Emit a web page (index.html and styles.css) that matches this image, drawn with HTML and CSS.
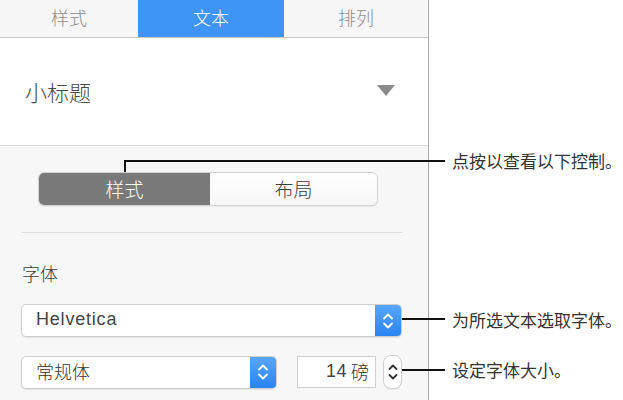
FILE: index.html
```html
<!DOCTYPE html>
<html lang="zh-CN">
<head>
<meta charset="utf-8">
<link rel="stylesheet" href="styles.css">
</head>
<body>
<div class="page">
  <div class="panel">
    <div class="tabs">
      <div class="tab tab-style">样式</div>
      <div class="tab tab-text active">文本</div>
      <div class="tab tab-arrange">排列</div>
    </div>
    <div class="header">
      <span class="heading">小标题</span>
      <svg class="disclosure" width="18" height="11" viewBox="0 0 18 11"><path d="M0 0 H18 L9 11 Z" fill="#8a8a8a"/></svg>
    </div>
    <div class="lower">
      <div class="segmented">
        <div class="seg seg-on">样式</div>
        <div class="seg">布局</div>
      </div>
      <div class="rule"></div>
      <div class="label">字体</div>
      <div class="popup popup-font">
        <span class="popup-value latin">Helvetica</span>
        <span class="popup-btn">
          <svg width="12" height="20" viewBox="0 0 12 20"><path d="M2 7.5 L6 3.5 L10 7.5 M2 12.5 L6 16.5 L10 12.5" fill="none" stroke="#fff" stroke-width="1.8" stroke-linecap="round" stroke-linejoin="round"/></svg>
        </span>
      </div>
      <div class="row">
        <div class="popup popup-weight">
          <span class="popup-value">常规体</span>
          <span class="popup-btn">
            <svg width="12" height="20" viewBox="0 0 12 20"><path d="M2 7.5 L6 3.5 L10 7.5 M2 12.5 L6 16.5 L10 12.5" fill="none" stroke="#fff" stroke-width="1.8" stroke-linecap="round" stroke-linejoin="round"/></svg>
          </span>
        </div>
        <div class="size-field"><span class="num">14</span>&nbsp;磅</div>
        <div class="stepper">
          <svg width="12" height="22" viewBox="0 0 12 22"><path d="M2.5 8 L6 4.5 L9.5 8 M2.5 14 L6 17.5 L9.5 14" fill="none" stroke="#333" stroke-width="1.8" stroke-linecap="round" stroke-linejoin="round"/></svg>
        </div>
      </div>
    </div>
  </div>

  <div class="callout-line c1-v"></div>
  <div class="callout-line c1-h"></div>
  <div class="callout-text t1">点按以查看以下控制。</div>

  <div class="callout-line c2-h"></div>
  <div class="callout-text t2">为所选文本选取字体。</div>

  <div class="callout-line c3-h"></div>
  <div class="callout-text t3">设定字体大小。</div>
</div>
</body>
</html>
```

FILE: styles.css
```css
* { box-sizing: border-box; }
html, body {
  margin: 0;
  padding: 0;
  background: #ffffff;
}
body {
  font-family: "Noto Sans CJK SC", "Noto Sans", sans-serif;
  font-weight: 300;
  color: #333;
}
.page {
  position: relative;
  width: 623px;
  height: 400px;
  overflow: hidden;
}
.panel {
  width: 429px;
  height: 400px;
  border-right: 1px solid #a9a9a9;
  background: #f7f7f7;
  display: flex;
  flex-direction: column;
}
.tabs {
  display: flex;
  height: 38px;
  background: #f6f6f6;
  border-bottom: 1px solid #c8c8c8;
}
.tab {
  display: flex;
  align-items: center;
  justify-content: center;
  font-size: 18px;
  color: #8c8c8c;
  height: 37px;
  padding-bottom: 4px;
}
.tab-style { width: 138px; }
.tab-text { width: 146px; }
.tab-arrange { width: 144px; }
.tab.active {
  background: #3f95f6;
  color: #ffffff;
}
.header {
  height: 108px;
  background: #ffffff;
  border-bottom: 1px solid #dcdcdc;
  display: flex;
  align-items: center;
  justify-content: space-between;
  padding: 0 33px 2px 25px;
}
.heading {
  font-size: 22px;
  color: #4a4a4a;
}
.disclosure { display: block; }
.lower {
  flex: 1;
  background: #f7f7f7;
  padding: 26px 25px 0 21px;
}
.segmented {
  display: flex;
  height: 34px;
  margin: 0 25px 0 17px;
  border: 1px solid #d2d2d2;
  border-radius: 6px;
  overflow: hidden;
  background: linear-gradient(#ffffff, #f7f7f7);
  box-shadow: 0 1px 1px rgba(0,0,0,0.06);
}
.seg {
  display: flex;
  align-items: center;
  justify-content: center;
  font-size: 19px;
  color: #3c3c3c;
  flex: 1;
  padding-bottom: 2px;
}
.seg.seg-on {
  flex: 0 0 171px;
  background: #797979;
  color: #ffffff;
}
.rule {
  height: 1px;
  background: #dddddd;
  margin-top: 26px;
}
.label {
  margin-top: 28px;
  height: 26px;
  line-height: 24px;
  font-size: 18px;
  color: #3a3a3a;
  padding-left: 1px;
}
.popup {
  display: flex;
  align-items: stretch;
  height: 33px;
  border: 1px solid #cfcfcf;
  border-radius: 5px;
  background: #ffffff;
  box-shadow: 0 1px 1px rgba(0,0,0,0.08);
  overflow: hidden;
}
.popup-font {
  margin-top: 17px;
  width: 381px;
}
.popup-value {
  flex: 1;
  display: flex;
  align-items: center;
  padding-left: 14px;
  font-size: 18px;
  color: #333;
  padding-bottom: 2px;
}
.latin {
  font-family: "Liberation Sans", Arial, sans-serif;
  font-weight: 400;
  letter-spacing: 0.8px;
  font-size: 18px;
  color: #444;
}
.num {
  font-family: "Liberation Sans", Arial, sans-serif;
  font-weight: 400;
  font-size: 18px;
  letter-spacing: 0.5px;
  color: #444;
}
.popup-btn {
  width: 26px;
  background: linear-gradient(#58a6fa, #2a83f0);
  display: flex;
  align-items: center;
  justify-content: center;
}
.popup-btn svg { display: block; }
.row {
  display: flex;
  align-items: center;
  margin-top: 18px;
}
.popup-weight {
  width: 256px;
}
.size-field {
  margin-left: 20px;
  width: 79px;
  height: 32px;
  border: 1px solid #cfcfcf;
  background: #ffffff;
  display: flex;
  align-items: center;
  justify-content: flex-end;
  padding-right: 6px;
  padding-bottom: 2px;
  font-size: 18px;
  color: #333;
}
.stepper {
  margin-left: 7px;
  width: 19px;
  height: 34px;
  border: 1px solid #cfcfcf;
  border-radius: 8px;
  background: #ffffff;
  display: flex;
  align-items: center;
  justify-content: center;
  box-shadow: 0 1px 1px rgba(0,0,0,0.06);
}
.stepper svg { display: block; }

/* callouts overlaying the panel */
.callout-line {
  position: absolute;
  background: #111111;
}
.c1-v { left: 124px; top: 160px; width: 2px; height: 12px; }
.c1-h { left: 124px; top: 160px; width: 321px; height: 2px; }
.c2-h { left: 402px; top: 318px; width: 43px; height: 2px; }
.c3-h { left: 402px; top: 369px; width: 43px; height: 2px; }
.callout-text {
  position: absolute;
  left: 452px;
  font-size: 17px;
  font-weight: 400;
  line-height: 24px;
  color: #333;
  white-space: nowrap;
}
.t1 { top: 149px; }
.t2 { top: 308px; }
.t3 { top: 358px; }
```
